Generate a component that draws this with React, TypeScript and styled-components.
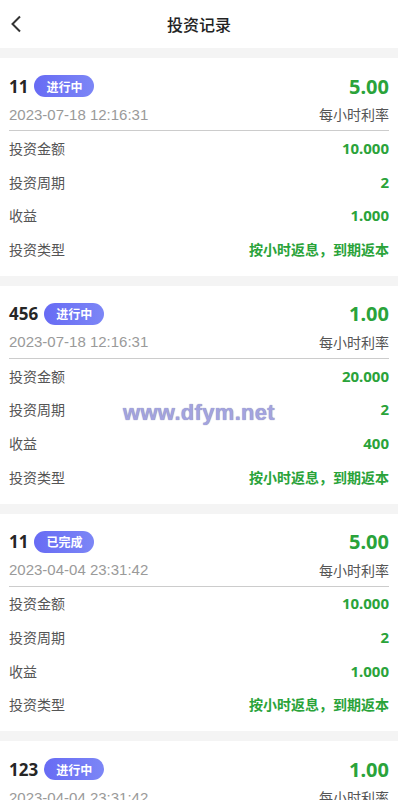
import styled, { createGlobalStyle } from "styled-components";

const GlobalStyle = createGlobalStyle`
  body {
    margin: 0;
    background: #f4f4f4;
    font-family: "Liberation Sans", "Noto Sans CJK SC", sans-serif;
  }
`;

type Record = {
  id: string;
  status: string;
  rate: string;
  time: string;
  amount: string;
  period: string;
  income: string;
  kind: string;
};

const records: Record[] = [
  { id: "11", status: "进行中", rate: "5.00", time: "2023-07-18 12:16:31", amount: "10.000", period: "2", income: "1.000", kind: "按小时返息，到期返本" },
  { id: "456", status: "进行中", rate: "1.00", time: "2023-07-18 12:16:31", amount: "20.000", period: "2", income: "400", kind: "按小时返息，到期返本" },
  { id: "11", status: "已完成", rate: "5.00", time: "2023-04-04 23:31:42", amount: "10.000", period: "2", income: "1.000", kind: "按小时返息，到期返本" },
  { id: "123", status: "进行中", rate: "1.00", time: "2023-04-04 23:31:42", amount: "10.000", period: "2", income: "1.000", kind: "按小时返息，到期返本" },
];

const Page = styled.div`
  position: relative;
  width: 398px;
  height: 800px;
  overflow: hidden;
  background: #f4f4f4;
`;

const Header = styled.header`
  height: 48px;
  background: #fff;
  display: flex;
  align-items: center;
  justify-content: center;
  position: relative;
`;

const BackButton = styled.button`
  position: absolute;
  left: 4px;
  top: 12px;
  width: 24px;
  height: 24px;
  padding: 0;
  border: none;
  background: none;
  display: flex;
  align-items: center;
  justify-content: center;
`;

const Title = styled.h1`
  margin: 0;
  font-size: 16px;
  font-weight: 500;
  color: #222;
  font-family: "Noto Sans CJK SC", sans-serif;
`;

const List = styled.div`
  display: flex;
  flex-direction: column;
  gap: 10px;
  padding-top: 10px;
`;

const Card = styled.div`
  background: #fff;
  padding: 14px 9px 10px;
`;

const TopRow = styled.div`
  height: 28px;
  display: flex;
  align-items: center;
`;

const OrderId = styled.span`
  font-family: "Noto Sans", "Noto Sans CJK SC", sans-serif;
  font-size: 17px;
  font-weight: 700;
  color: #262626;
  margin-right: 6px;
`;

const Badge = styled.span`
  height: 22px;
  padding: 0 12px;
  border-radius: 11px;
  background: linear-gradient(90deg, #676bf4, #7c86f6);
  color: #fff;
  font-family: "Noto Sans CJK SC", sans-serif;
  font-size: 12px;
  font-weight: 700;
  display: flex;
  align-items: center;
`;

const Rate = styled.span`
  margin-left: auto;
  font-family: "Noto Sans", sans-serif;
  font-size: 20px;
  font-weight: 700;
  color: #2aa33a;
`;

const DateRow = styled.div`
  margin-top: 2px;
  height: 24px;
  padding-bottom: 4px;
  border-bottom: 1px solid #cccccc;
  display: flex;
  align-items: center;
  justify-content: space-between;
`;

const DateText = styled.span`
  font-size: 15px;
  color: #9a9a9a;
`;

const RateLabel = styled.span`
  font-family: "Noto Sans CJK SC", sans-serif;
  font-size: 14px;
  color: #555;
`;

const InfoRow = styled.div`
  height: 33.7px;
  display: flex;
  align-items: center;
  justify-content: space-between;
`;

const Label = styled.span`
  font-family: "Noto Sans CJK SC", sans-serif;
  font-size: 14px;
  color: #555;
`;

const Value = styled.span<{ $text?: boolean }>`
  font-family: "Noto Sans", "Noto Sans CJK SC", sans-serif;
  font-size: ${(p) => (p.$text ? "14px" : "15px")};
  font-weight: 700;
  color: #2aa33a;
`;

const Watermark = styled.div`
  position: absolute;
  top: 400px;
  left: 0;
  right: 0;
  text-align: center;
  font-family: "Liberation Sans", sans-serif;
  font-size: 22px;
  font-weight: 700;
  letter-spacing: 0.3px;
  color: #a3a3df;
  text-shadow: 0 0 1px #7a7aa0;
  pointer-events: none;
`;

const ChevronLeft = () => (
  <svg width="14" height="18" viewBox="0 0 14 18" fill="none">
    <path d="M11 1.5L3.5 9L11 16.5" stroke="#333" strokeWidth="2" />
  </svg>
);

const RecordCard = ({ r }: { r: Record }) => (
  <Card>
    <TopRow>
      <OrderId>{r.id}</OrderId>
      <Badge>{r.status}</Badge>
      <Rate>{r.rate}</Rate>
    </TopRow>
    <DateRow>
      <DateText>{r.time}</DateText>
      <RateLabel>每小时利率</RateLabel>
    </DateRow>
    <InfoRow>
      <Label>投资金额</Label>
      <Value>{r.amount}</Value>
    </InfoRow>
    <InfoRow>
      <Label>投资周期</Label>
      <Value>{r.period}</Value>
    </InfoRow>
    <InfoRow>
      <Label>收益</Label>
      <Value>{r.income}</Value>
    </InfoRow>
    <InfoRow>
      <Label>投资类型</Label>
      <Value $text>{r.kind}</Value>
    </InfoRow>
  </Card>
);

export default function App() {
  return (
    <>
      <GlobalStyle />
      <Page>
        <Header>
          <BackButton>
            <ChevronLeft />
          </BackButton>
          <Title>投资记录</Title>
        </Header>
        <List>
          {records.map((r, i) => (
            <RecordCard key={i} r={r} />
          ))}
        </List>
        <Watermark>www.dfym.net</Watermark>
      </Page>
    </>
  );
}
